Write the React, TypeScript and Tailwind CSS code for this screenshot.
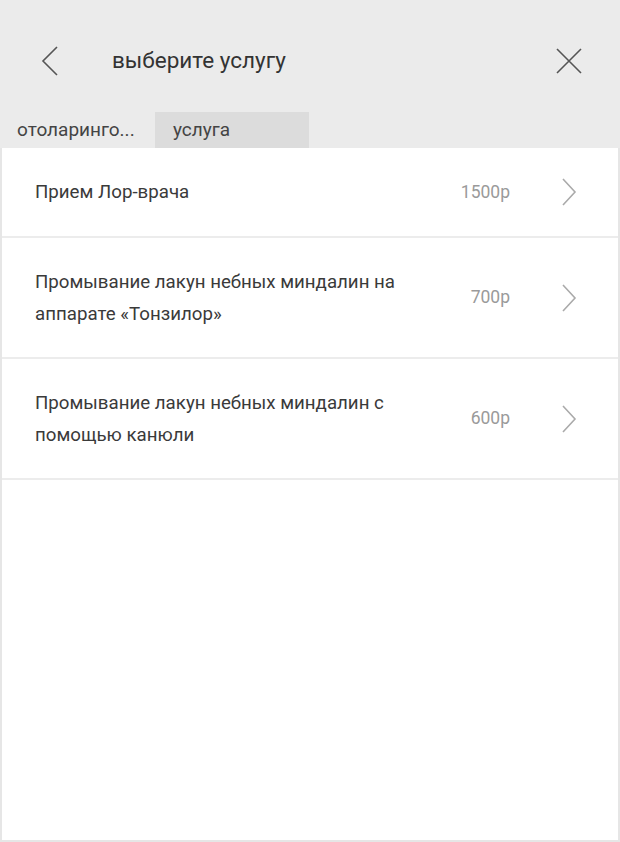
import React from "react";

const SERVICES = [
  { name: "Прием Лор-врача", price: "1500р", lines: 1 },
  { name: "Промывание лакун небных миндалин на аппарате «Тонзилор»", price: "700р", lines: 2 },
  { name: "Промывание лакун небных миндалин с помощью канюли", price: "600р", lines: 2 },
];

function Chevron({ dir }: { dir: "left" | "right" }) {
  return (
    <svg width="20" height="32" viewBox="0 0 20 32" fill="none">
      <path
        d={dir === "left" ? "M17 2 L3 16 L17 30" : "M3 2 L17 16 L3 30"}
        stroke="currentColor"
        strokeWidth="1.6"
      />
    </svg>
  );
}

export default function App() {
  return (
    <div
      className="flex h-[842px] w-[620px] flex-col bg-[#ebebeb] text-[#333]"
      style={{ fontFamily: "Roboto, 'Noto Sans', sans-serif" }}
    >
      <header className="flex h-[112px] items-center px-[40px] pt-[10px]">
        <span className="text-[#555]">
          <Chevron dir="left" />
        </span>
        <h1 className="ml-[52px] flex-1 text-[22.5px] text-[#333]">выберите услугу</h1>
        <svg width="26" height="26" viewBox="0 0 26 26" className="mr-[-2px] text-[#555]">
          <path d="M1 1 L25 25 M25 1 L1 25" stroke="currentColor" strokeWidth="1.6" />
        </svg>
      </header>

      <nav className="flex h-[36px] items-stretch text-[19px]">
        <div className="flex w-[155px] items-center pl-[17px] text-[#444]">отоларинго...</div>
        <div className="flex w-[154px] items-center bg-[#dcdcdc] pl-[18px] text-[#444]">услуга</div>
      </nav>

      <ul className="flex-1 border-x-2 border-b-2 border-[#e6e6e6] bg-white">
        {SERVICES.map((s) => (
          <li
            key={s.name}
            className={`flex items-center border-b-2 border-[#ececec] pl-[33px] pr-[40px] ${
              s.lines === 1 ? "h-[90px]" : "h-[121px]"
            }`}
          >
            <p className="w-[400px] text-[18.7px] leading-[32px] text-[#3a3a3a]">{s.name}</p>
            <span className="ml-auto text-[17.5px] text-[#9a9a9a]">{s.price}</span>
            <span className="ml-[50px] text-[#aaa]">
              <svg width="18" height="30" viewBox="0 0 18 30" fill="none">
                <path d="M3 2 L15 15 L3 28" stroke="currentColor" strokeWidth="1.6" />
              </svg>
            </span>
          </li>
        ))}
      </ul>
    </div>
  );
}
